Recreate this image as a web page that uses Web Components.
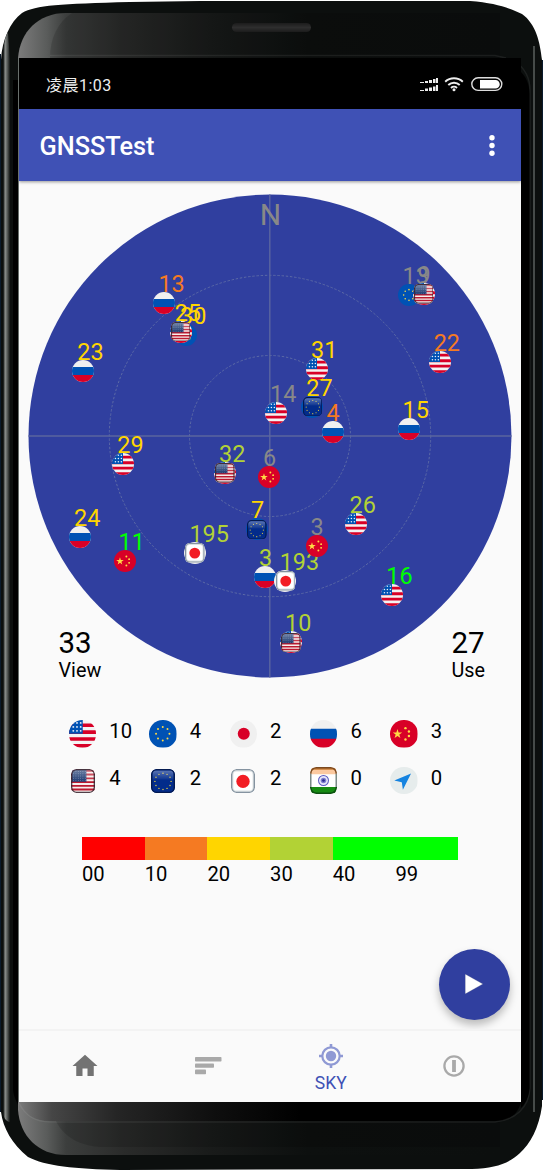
<!DOCTYPE html>
<html lang="zh">
<head>
<meta charset="utf-8">
<title>GNSSTest</title>
<style>
body{margin:0;background:#fff;font-family:Roboto,"Noto Sans CJK SC",sans-serif;color:#000}
</style>
</head>
<body>
<phone-frame>
  <status-bar>凌晨1:03</status-bar>
  <app-bar>GNSSTest</app-bar>
  <sky-view></sky-view>
  <constellation-legend></constellation-legend>
  <signal-scale></signal-scale>
  <play-button></play-button>
  <bottom-nav></bottom-nav>
</phone-frame>
<script>
const define = (name, html) => customElements.define(name, class extends HTMLElement {
  connectedCallback() {
    if (this.shadowRoot) return;
    this.attachShadow({mode: 'open'}).innerHTML = typeof html === 'function' ? html(this) : html;
  }
});

/* ---------- flags, 32 x 32 box ---------- */
const stars = (cx, cy, r, n, s, fill) => Array.from({length: n}, (_, i) => {
  const a = i * 2 * Math.PI / n;
  return `<circle cx="${(cx + r * Math.sin(a)).toFixed(2)}" cy="${(cy - r * Math.cos(a)).toFixed(2)}" r="${s}" fill="${fill}"/>`;
}).join('');
const grid = (x0, y0, dx, dy, c, r, s, o2 = 1) => {
  let o = '';
  for (let j = 0; j < r; j++) for (let i = 0; i < c; i++) o += `<circle cx="${x0 + i * dx}" cy="${y0 + j * dy}" r="${s}" fill="#e8eef8" fill-opacity="${o2}"/>`;
  return o;
};
const gloss = `<defs><linearGradient id="g" x1="0" y1="0" x2="0" y2="1"><stop offset="0" stop-color="#fff" stop-opacity=".38"/><stop offset="1" stop-color="#fff" stop-opacity=".05"/></linearGradient></defs>`;
const FLAGS = {
  us: `<rect width="32" height="32" fill="#f3f2f2"/><path fill="#d80027" d="M0 4h32v4H0zM0 12h32v4.200H0zM0 20h32v4H0zM0 28h32v4H0z"/><path fill="#0052b4" d="M0 0h16v16H0z"/>${grid(5, 3.4, 4.3, 4.6, 3, 3, 1.1)}`,
  eu: `<rect width="32" height="32" fill="#0052b4"/>${stars(16, 16, 7.8, 8, 1.15, '#ffda44')}`,
  jp: `<rect width="32" height="32" fill="#f0f0f0"/><circle cx="16" cy="16" r="7" fill="#d80027"/>`,
  ru: `<rect width="32" height="32" fill="#f0f0f0"/><path fill="#0052b4" d="M0 10.300h32v12H0z"/><path fill="#d80027" d="M0 21.700h32V32H0z"/>`,
  cn: `<rect width="32" height="32" fill="#d80027"/><path fill="#ffda44" d="M8.700 10.500l1.300 4h4.200l-3.400 2.500 1.300 4-3.400-2.500-3.400 2.500 1.300-4-3.400-2.500h4.200z"/><g fill="#ffda44"><circle cx="18" cy="9.500" r="1.400"/><circle cx="22" cy="13.300" r="1.400"/><circle cx="22" cy="18.700" r="1.400"/><circle cx="18" cy="22.600" r="1.400"/></g>`,
  nav: `<rect width="32" height="32" fill="#e6ecec"/><path fill="#1583e0" d="M24.500 7.500L5 15.800l8.700 1.800 1.300 9z"/>`,
  ussq: `${gloss}<g><rect width="32" height="32" rx="7" fill="#f6eeec"/><path fill="#bb1a30" d="M1 1h30v2.600H1zM0 6.100h32v2.500H0zM0 11.200h32v2.500H0zM0 16.200h32v2.500H0zM0 21.200h32v2.500H0zM0 26h32v2.500H0z"/><path fill="#16346d" d="M1 1h19.500v16H1z"/>${grid(3.5, 3.3, 3.1, 3, 6, 5, .6, .55)}<path fill="url(#g)" d="M1 1h30v15H1z"/><rect x=".9" y=".9" width="30.200" height="30.200" rx="6.500" fill="none" stroke="#33202c" stroke-opacity=".85" stroke-width="1.800"/></g>`,
  eusq: `${gloss}<rect width="32" height="32" rx="7" fill="#032c8b"/>${stars(16, 16.5, 10.8, 12, .95, '#e6cf3c')}<path fill="url(#g)" d="M2 2h28v12H2z" opacity=".9"/><rect x=".9" y=".9" width="30.200" height="30.200" rx="6.500" fill="none" stroke="#041a50" stroke-width="1.800"/>`,
  jpsq: `<rect width="32" height="32" rx="7" fill="#fff"/><circle cx="16" cy="16.500" r="8.900" fill="#f21d24"/><rect x="2.200" y="2.200" width="27.600" height="27.600" rx="5.500" fill="none" stroke="#dce2e4" stroke-width="2"/><rect x=".9" y=".9" width="30.200" height="30.200" rx="6.500" fill="none" stroke="#8593a0" stroke-width="1.800"/>`,
  insq: `<rect width="32" height="32" rx="7" fill="#fff"/><path fill="#fbc9a0" d="M1 1h30v7.500H1z"/><path fill="#168a12" d="M1 23.800h30V31H1z"/><path fill="#c97b35" d="M1 1h30v2.200H1z"/><circle cx="16" cy="16" r="5.900" fill="#e8e8fa" stroke="#5a5ac0" stroke-width="1.200"/><circle cx="16" cy="16" r="3.300" fill="#8080d0"/><circle cx="16" cy="16" r="1.600" fill="#28288c"/><path d="M.9 8V7.400A6.500 6.500 0 0 1 7.400.9h17.200a6.500 6.500 0 0 1 6.500 6.500V8" fill="none" stroke="#7b4a20" stroke-width="1.800"/><path d="M.9 8v16M31.100 8v16" stroke="#7b8b88" stroke-width="1.800"/><path d="M.9 23.800v.8a6.500 6.500 0 0 0 6.500 6.500h17.200a6.500 6.500 0 0 0 6.500-6.500v-.8" fill="none" stroke="#0d4f10" stroke-width="1.800"/>`
};
define('flag-icon', el => {
  const k = el.getAttribute('kind'), sq = k.endsWith('sq');
  return `<style>:host{display:block;width:var(--size,22px);height:var(--size,22px);flex:none}
  svg{display:block;width:100%;height:100%;border-radius:${sq ? '22%' : '50%'};overflow:hidden}</style>
  <svg viewBox="0 0 32 32">${FLAGS[k]}</svg>`;
});

/* ---------- device body ---------- */
define('phone-frame', `<style>
:host{display:block;position:relative;box-sizing:border-box;width:543px;height:1170px;padding:58px 22px 68px 19px}
.body{position:absolute;left:0;top:0}
.screen{position:relative;display:flex;flex-direction:column;height:1044px;background:#fafafa;overflow:hidden}
</style>
<svg class="body" width="543" height="1170" viewBox="0 0 543 1170">
<defs>
<linearGradient id="a" gradientUnits="userSpaceOnUse" x1="18" y1="0" x2="500" y2="0"><stop offset="0" stop-color="#7c7c7c"/><stop offset=".06" stop-color="#5a5c5b"/><stop offset=".1" stop-color="#3c3e3d"/><stop offset=".22" stop-color="#2a2b2a"/><stop offset=".4" stop-color="#191b1a"/><stop offset=".6" stop-color="#0d100f"/><stop offset="1" stop-color="#0c0f0e"/></linearGradient>
<linearGradient id="b" gradientUnits="userSpaceOnUse" x1="18" y1="0" x2="300" y2="0"><stop offset="0" stop-color="#7c7c7c"/><stop offset=".12" stop-color="#464646"/><stop offset=".35" stop-color="#252525"/><stop offset=".7" stop-color="#0e0e0e"/><stop offset="1" stop-color="#000"/></linearGradient>
<linearGradient id="c" gradientUnits="userSpaceOnUse" x1="2" y1="0" x2="10" y2="0"><stop offset="0" stop-color="#0c0f0e"/><stop offset=".15" stop-color="#0c0f0e"/><stop offset=".4" stop-color="#8b8f8d"/><stop offset=".65" stop-color="#5a5e5c"/><stop offset="1" stop-color="#111413"/></linearGradient>
<linearGradient id="e" x1="0" y1="0" x2="0" y2="1"><stop offset="0" stop-color="#1c1c1c"/><stop offset=".5" stop-color="#2e2e2e"/><stop offset="1" stop-color="#1c1c1c"/></linearGradient>
</defs>
<path fill="#0c0f0e" d="M1 1112V60C2 40 10 22 22 13C36 5 60 4 130 2L200 1H470C496 3 509 8 522 14C536 24 540 42 542 60V1106C539 1128 530 1144 520 1153C508 1164 495 1168 472 1169L120 1170C75 1169 45 1166 28 1157C12 1144 3 1128 1 1112Z"/>
<path fill="#0a1a2c" d="M0 54h1v1058H0zM542 60h1v1040h-1z"/>
<path fill="url(#c)" d="M2 1110V58C3 44 6 35 8 32L10 60V1122C6 1122 3 1117 2 1110Z"/>
<path fill="url(#a)" d="M18 1102V58C20 32 38 13 66 13H500V1155H66C38 1155 20 1136 18 1110Z"/>
<path fill="#000" fill-opacity=".14" d="M50 58C50 38 58 22 72 13H500V58ZM50 1102C54 1128 70 1145 100 1147H500V1102Z"/>
<path fill="url(#b)" d="M18 1102H521C518 1115 508 1121 495 1121H50C34 1121 24 1114 18 1102Z"/>
<path fill="none" stroke="#fff" stroke-opacity=".07" stroke-width="1.500" d="M19 1103C26 1117 36 1122 50 1122H495C515 1120 529 1108 530 1088V90C530 76 523 67 515 61M50 55.500H495L506 58"/>
<path fill="#000" d="M13 80H18V1105C15 1098 13 1094 13 1088ZM521 72C526 77 529.500 84 529.500 94V1088C529 1096 526 1103 521 1108Z"/>
<path fill="#69706d" d="M18 58h1v1044h-1z"/>
<path stroke="#6f7472" stroke-width="1.200" fill="none" d="M534 46V1112"/>
<rect x="232" y="23" width="79" height="9" rx="4.500" fill="url(#e)"/>
</svg>
<div class="screen"><slot></slot></div>`);

define('status-bar', `<style>
:host{display:flex;align-items:center;justify-content:space-between;height:51px;flex:none;box-sizing:border-box;padding:5px 18px 0 27px;background:#000;color:#eee;font:16px/22px Roboto,"Noto Sans CJK SC",sans-serif;letter-spacing:.5px}
svg{display:block;transform:translateY(-2px)}
</style><slot></slot>
<svg width="84" height="16" viewBox="0 0 84 16" fill="#eee">
<path d="M1 6h4v1H1zM6 5h3v2H6zM10 4h3v3h-3zM14 3h2.500v4H14zM17 2h2v5h-2zM1 14h4v1H1zM6 12.500h3V15H6zM10 11.500h3V15h-3zM14 10.500h2.500V15H14zM17 9h2v6h-2z"/>
<g fill="none" stroke="#eee" stroke-width="1.900"><path d="M26.200 5.700a12.800 12.800 0 0 1 17.600 0M29.300 9a8.200 8.200 0 0 1 11.400 0M32 12a4.400 4.400 0 0 1 6 0"/></g><circle cx="35" cy="13.700" r="1.500"/>
<rect x="52.800" y="1.800" width="30" height="12.600" rx="6.300" fill="none" stroke="#ddd" stroke-width="1.400"/><path fill="#fff" d="M61 4h15.500a4.200 4.200 0 0 1 0 8.500H61z"/>
</svg>`);

define('app-bar', `<style>
:host{display:flex;align-items:center;justify-content:space-between;height:72px;flex:none;box-sizing:border-box;padding:3px 25px 0 20.500px;background:#3f51b5;box-shadow:0 1px 3px rgba(0,0,0,.4);color:#fff;font-weight:500;font-size:25.300px;z-index:1}
svg{display:block;transform:translateY(-1.500px)}
</style><slot></slot><svg width="8" height="24" viewBox="0 0 8 24" fill="#fff"><circle cx="4" cy="4.300" r="2.700"/><circle cx="4" cy="12" r="2.700"/><circle cx="4" cy="19.700" r="2.700"/></svg>`);

/* ---------- sky plot ---------- */
define('sat-marker', el => {
  const k = el.getAttribute('kind'), base = {ussq: 'us', eusq: 'eu', jpsq: 'jp'}[k];
  return `<style>
:host{display:block;position:absolute;width:22px;height:22px}
span{position:absolute;left:var(--dx,4px);top:-20px;font-size:23.400px;line-height:24px;white-space:nowrap}
div{position:relative;display:grid;place-items:center;width:22px;height:22px}
flag-icon{grid-area:1/1}
.top{--size:19.500px}
</style><span><slot></slot></span><div>${base ? `<flag-icon kind="${base}"></flag-icon><flag-icon class="top" kind="${k}"></flag-icon>` : `<flag-icon kind="${k}"></flag-icon>`}</div>`;
});
const O = '#f57a22', Y = '#ffd500', L = '#b2d235', G = '#00ff00', D = '#888888';
const SATS = [
  ['ru', 164.4, 302.7, '13', O], ['eu', 186, 334.5, '30', Y], ['ussq', 180.7, 331.5, '25', Y], ['ru', 83.3, 370.7, '23', Y],
  ['us', 123.3, 463.7, '29', Y], ['ru', 80, 536.5, '24', Y], ['cn', 124.5, 560.5, '11', G],
  ['ussq', 225, 473, '32', L], ['cn', 269, 476.7, '6', D], ['eusq', 257, 529.3, '7', Y], ['ru', 265, 577, '3', L],
  ['eu', 408.5, 294.8, '13', D], ['ussq', 423.5, 294, '9', D], ['us', 439.7, 362.3, '22', O], ['us', 317, 369, '31', Y],
  ['us', 276, 412.5, '14', D], ['eusq', 312.3, 406.7, '27', Y], ['ru', 332.5, 432, '4', O], ['ru', 408.5, 428.5, '15', Y],
  ['us', 355.5, 524, '26', L], ['jpsq', 195, 553.2, '195', L], ['jpsq', 285.3, 581, '193', L], ['cn', 316.5, 545.5, '3', D],
  ['us', 392.3, 594.5, '16', G], ['ussq', 291, 642.3, '10', L]
];
define('sky-count', `<style>
:host{display:block}
b{display:block;font-weight:400;font-size:29.500px;line-height:31px}
small{display:block;font-size:19.800px;line-height:24px}
</style><b><slot name="n"></slot></b><small><slot></slot></small>`);
define('sky-view', `<style>
:host{display:grid;flex:none;height:502px}
.plot,.counts{grid-area:1/1}
.plot{position:relative;width:502px;height:502px}
.plot>svg{display:block}
.counts{position:relative;display:flex;justify-content:space-between;align-items:flex-end;padding:0 36px 0 39.500px}
</style>
<div class="plot"><svg width="502" height="502" viewBox="19 181 502 502">
<circle cx="270" cy="436" r="241.500" fill="#303f9f"/>
<g fill="none" stroke="#5c6aa6" stroke-width="1" stroke-dasharray="2.400 1.800"><circle cx="270" cy="436" r="160.700"/><circle cx="270" cy="436" r="80.500"/></g>
<path stroke="#5a659f" stroke-width="1.400" d="M28.500 436H511.500M269.800 194.500V677.500"/>
<text x="270.500" y="225" font-size="30" text-anchor="middle" fill="#888">N</text></svg>
${SATS.map(([k, x, y, t, c]) => `<sat-marker kind="${k}" style="left:${(x - 30).toFixed(1)}px;top:${(y - 192).toFixed(1)}px;color:${c};--dx:${t.length > 2 ? 5.4 : 5}px">${t}</sat-marker>`).join('')}
</div>
<div class="counts"><sky-count><span slot="n">33</span>View</sky-count><sky-count><span slot="n">27</span>Use</sky-count></div>`);

/* ---------- legend ---------- */
const ROWS = [['us', 10, 'eu', 4, 'jp', 2, 'ru', 6, 'cn', 3], ['ussq', 4, 'eusq', 2, 'jpsq', 2, 'insq', 0, 'nav', 0]];
define('legend-item', el => {
  const k = el.getAttribute('kind'), s = {ussq: 24, eusq: 24, jpsq: 24, insq: 27}[k] || 27.5;
  return `<style>:host{display:flex;height:28px;font-size:20.300px;line-height:22px}
i{display:grid;place-items:center;width:28px;height:28px;margin-right:12.800px}flag-icon{--size:${s}px}</style>
<i><flag-icon kind="${k}"></flag-icon></i><slot></slot>`;
});
define('constellation-legend', `<style>
:host{display:grid;grid-template-columns:repeat(5,80.400px);row-gap:18.500px;flex:none;padding:37px 0 0 49.500px}
</style>${ROWS.map(r => r.map((k, i) => i % 2 ? '' : `<legend-item kind="${k}">${r[i + 1]}</legend-item>`).join('')).join('')}`);

define('signal-scale', `<style>
:host{display:grid;grid-template-columns:repeat(6,62.700px);flex:none;padding:42px 0 0 63px;font-size:20.200px;line-height:24px}
i{height:23px;margin-bottom:2px}
</style>${['#ff0000', O, '#ffd500', '#b2d235', '#00ff00', '#00ff00'].map(c => `<i style="background:${c}"></i>`).join('')}${['00', '10', '20', '30', '40', '99'].map(t => `<span>${t}</span>`).join('')}`);

define('play-button', `<style>
:host{display:grid;place-items:center;align-self:flex-end;flex:none;width:71.500px;height:71.500px;margin:auto 10.800px 9px 0;border-radius:50%;background:#303f9f;box-shadow:0 5px 9px rgba(0,0,0,.26)}
svg{display:block;transform:translateX(-.5px)}
</style><svg width="24" height="24" viewBox="0 0 24 24"><path d="M4 2.500L21 12L4 21.500z" fill="#fff" stroke="#7079a4" stroke-width="1" paint-order="stroke"/></svg>`);

/* ---------- bottom navigation ---------- */
define('nav-tab', `<style>
:host{display:flex;flex-direction:column;align-items:center;justify-content:center;width:123px;height:73px;box-sizing:border-box;font-size:17.500px;line-height:20px;color:#3f51b5}
</style><slot></slot>`);
define('bottom-nav', `<style>
:host{display:flex;justify-content:center;flex:none;height:73px;box-sizing:border-box;padding-right:1.500px;background:#fafafa;box-shadow:inset 0 2px #f3f3f3;position:relative}
svg{display:block}
.sky{padding-top:4px}
</style>
<nav-tab><svg width="30" height="30" viewBox="0 0 24 24"><path fill="#737373" d="M10 20v-6h4v6h5v-8h3L12 3 2 12h3v8z"/></svg></nav-tab>
<nav-tab><svg width="28" height="20" viewBox="0 0 28 20" fill="#a9a9a9"><rect x="1" y="1" width="26.500" height="4.600" rx=".8"/><rect x="1" y="7.400" width="19" height="4.400" rx=".8"/><rect x="1" y="13.600" width="11" height="4.600" rx=".8"/></svg></nav-tab>
<nav-tab class="sky"><svg width="26" height="26" viewBox="0 0 26 26"><g fill="none" stroke="#8f99d4"><circle cx="13" cy="13" r="8.700" stroke-width="2.200"/><path stroke-width="2.600" d="M13 1v4M13 21v4M1 13h4M21 13h4"/></g><circle cx="13" cy="13" r="5.200" fill="#8f99d4"/></svg><span style="margin-top:4px">SKY</span></nav-tab>
<nav-tab><svg width="24" height="24" viewBox="0 0 24 24" fill="none" stroke="#a9a9a9"><circle cx="12" cy="12" r="9.600" stroke-width="2.300"/><path stroke-width="3.800" d="M12 6v12"/></svg></nav-tab>`);
</script>
</body>
</html>
